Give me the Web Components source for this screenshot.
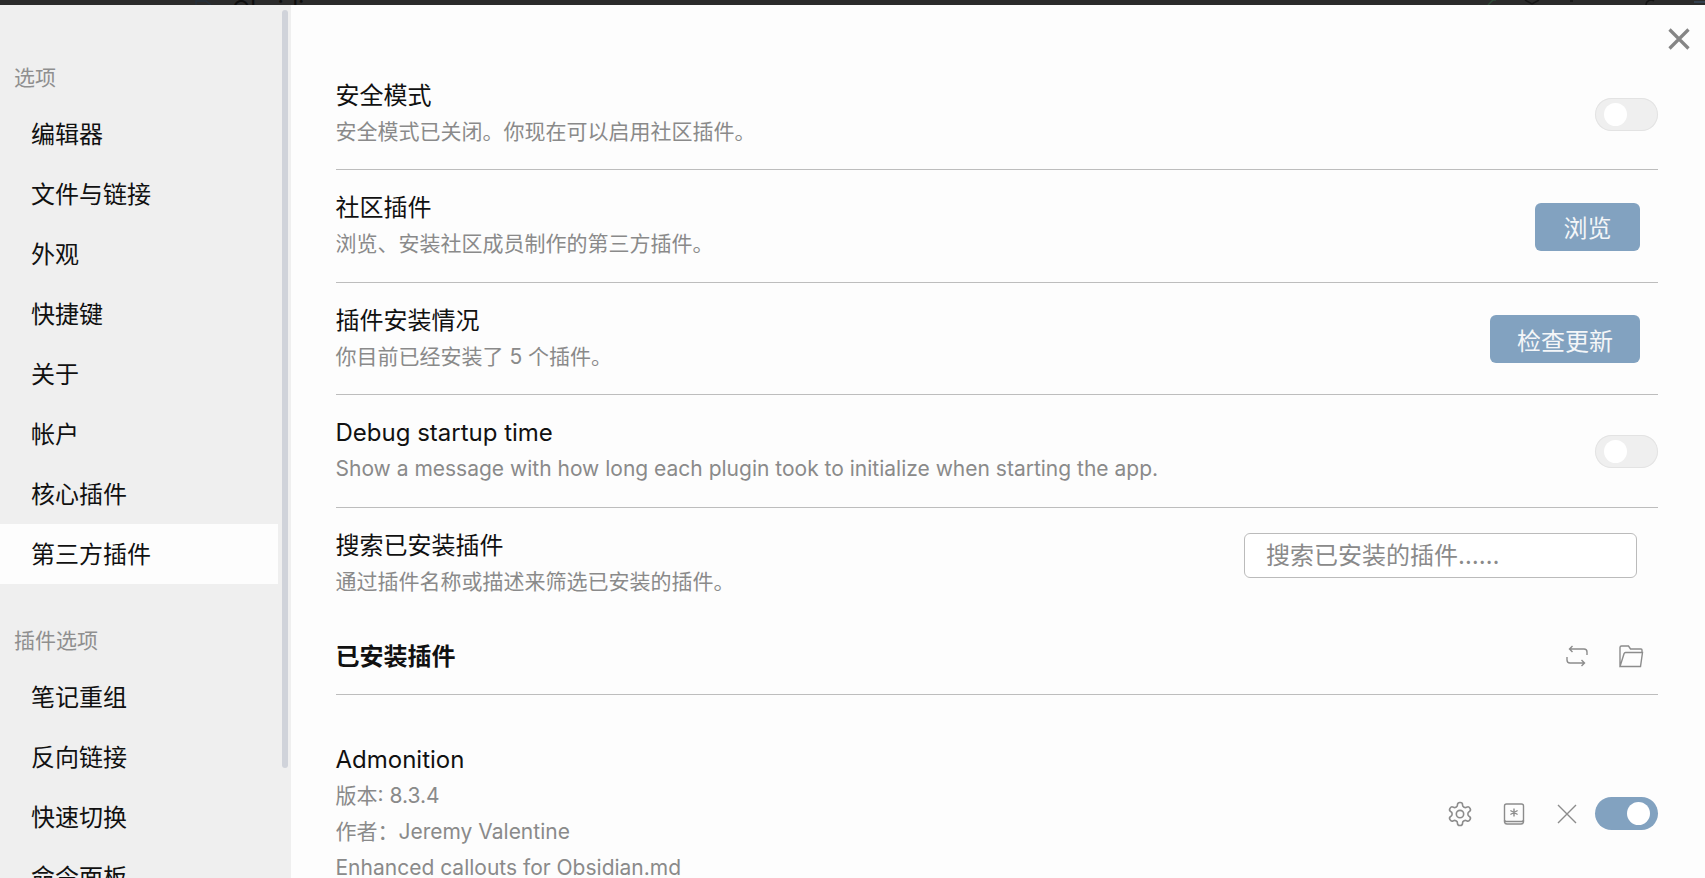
<!DOCTYPE html>
<html lang="zh-CN">
<head>
<meta charset="utf-8">
<title>设置</title>
<style>
	html, body {
		margin: 0;
		height: 100%;
		overflow: hidden;
		font-family: Inter, "Noto Sans CJK SC", sans-serif;
		background: #fdfdfd;
	}
</style>
</head>
<body>
<settings-modal>
	<settings-sidebar slot="side">
		<nav-group label="选项">
			<nav-item>编辑器</nav-item>
			<nav-item>文件与链接</nav-item>
			<nav-item>外观</nav-item>
			<nav-item>快捷键</nav-item>
			<nav-item>关于</nav-item>
			<nav-item>帐户</nav-item>
			<nav-item>核心插件</nav-item>
			<nav-item active>第三方插件</nav-item>
		</nav-group>
		<nav-group label="插件选项">
			<nav-item>笔记重组</nav-item>
			<nav-item>反向链接</nav-item>
			<nav-item>快速切换</nav-item>
			<nav-item>命令面板</nav-item>
		</nav-group>
	</settings-sidebar>

	<setting-row name="安全模式" desc="安全模式已关闭。你现在可以启用社区插件。">
		<toggle-switch></toggle-switch>
	</setting-row>
	<setting-row name="社区插件" desc="浏览、安装社区成员制作的第三方插件。">
		<action-button>浏览</action-button>
	</setting-row>
	<setting-row name="插件安装情况" desc="你目前已经安装了 5 个插件。">
		<action-button>检查更新</action-button>
	</setting-row>
	<setting-row name="Debug startup time" desc="Show a message with how long each plugin took to initialize when starting the app.">
		<toggle-switch></toggle-switch>
	</setting-row>
	<setting-row name="搜索已安装插件" desc="通过插件名称或描述来筛选已安装的插件。" plain>
		<search-field placeholder="搜索已安装的插件……"></search-field>
	</setting-row>

	<section-heading title="已安装插件">
		<icon-button icon="swap"></icon-button>
		<icon-button icon="folder"></icon-button>
	</section-heading>

	<plugin-row name="Admonition" version="版本: 8.3.4" author="作者：Jeremy Valentine" desc="Enhanced callouts for Obsidian.md">
		<icon-button icon="gear"></icon-button>
		<icon-button icon="hotkey"></icon-button>
		<icon-button icon="cross"></icon-button>
		<toggle-switch on></toggle-switch>
	</plugin-row>
</settings-modal>

<script>
const ICONS = {
	swap: '<path d="M7.500 2 4.500 5l3 3M4.500 5H19a3 3 0 0 1 3 3v3M16.500 22l3-3-3-3M19.500 19H5a3 3 0 0 1-3-3v-3"/>',
	folder: '<path d="M1 22.500V3.500A1.500 1.500 0 0 1 2.500 2h7l2 3h10.500a1 1 0 0 1 1 1V8.500M1 22.500h20.500l2-14H6.500a1.500 1.500 0 0 0-1.400 1z"/>',
	gear: '<g transform="translate(12 12) scale(1.15) translate(-12 -12)"><path d="M12.220 2h-.44a2 2 0 0 0-2 2v.18a2 2 0 0 1-1 1.730l-.43.25a2 2 0 0 1-2 0l-.15-.08a2 2 0 0 0-2.730.73l-.22.38a2 2 0 0 0 .73 2.730l.15.1a2 2 0 0 1 1 1.720v.51a2 2 0 0 1-1 1.740l-.15.09a2 2 0 0 0-.73 2.730l.22.38a2 2 0 0 0 2.730.73l.15-.08a2 2 0 0 1 2 0l.43.25a2 2 0 0 1 1 1.730V20a2 2 0 0 0 2 2h.44a2 2 0 0 0 2-2v-.18a2 2 0 0 1 1-1.730l.43-.25a2 2 0 0 1 2 0l.15.08a2 2 0 0 0 2.730-.73l.22-.39a2 2 0 0 0-.73-2.730l-.15-.08a2 2 0 0 1-1-1.740v-.5a2 2 0 0 1 1-1.740l.15-.09a2 2 0 0 0 .73-2.730l-.22-.38a2 2 0 0 0-2.730-.73l-.15.08a2 2 0 0 1-2 0l-.43-.25a2 2 0 0 1-1-1.730V4a2 2 0 0 0-2-2z"/><circle cx="12" cy="12" r="3.200"/></g>',
	hotkey: '<rect x="2.500" y="2" width="19" height="17.500" rx="2"/><path d="M2.500 18v2a2.500 2.500 0 0 0 2.500 2h14a2.500 2.500 0 0 0 2.500-2v-2M12 6.500v8M8.400 8.500l7.200 4M15.600 8.500l-7.200 4"/>',
	cross: '<path d="M3 3l18 18M21 3 3 21"/>'
}

class SettingsModal extends HTMLElement {
	constructor() {
		super()
		this.attachShadow({ mode: 'open' })
	}

	connectedCallback() {
		this.shadowRoot.innerHTML = `
			<style>
				:host {
					display: flex;
					flex-direction: column;
					height: 100vh;
					overflow: hidden;
					position: relative;
				}
				.strip {
					flex: 0 0 5px;
					position: relative;
					overflow: hidden;
					background: #2b2b2b;
					color: #0e0e0e;
					font-size: 24px;
					line-height: 24px;
					padding-left: 232px;
				}
				.strip span {
					display: block;
					margin-top: -2px;
				}
				.strip svg {
					position: absolute;
					top: 0;
					left: 0;
					fill: none;
					stroke-width: 1.500;
				}
				.body {
					flex: 1;
					display: flex;
					min-height: 0;
				}
				.content {
					flex: 1;
					min-width: 0;
					padding: 52.500px 47px 0 44.500px;
					background: #fdfdfd;
					overflow: hidden;
				}
				.close {
					position: absolute;
					top: 28px;
					left: 1668px;
					width: 22px;
					height: 22px;
				}
				.close svg {
					display: block;
					stroke: #858585;
					stroke-width: 3.200;
					fill: none;
				}
			</style>
			<div class="strip">
				<span>Obsidian</span>
				<svg width="1705" height="5" viewBox="0 0 1705 5">
					<path d="M196 5V1h10l5 4" stroke="#26303b"/>
					<path d="M1488 5l5-5h3" stroke="#2f4a38"/>
					<path d="M1525 0l7 4 7-4" stroke="#161616"/>
					<path d="M1570 1h3" stroke="#161616"/>
					<path d="M1646 5a5 5 0 0 1 8-4" stroke="#141414"/>
					<path d="M1694 2h11" stroke="#3a4a5c"/>
				</svg>
			</div>
			<div class="body">
				<slot name="side"></slot>
				<div class="content"><slot></slot></div>
			</div>
			<div class="close"><svg width="22" height="22" viewBox="0 0 22 22"><path d="M1.500 1.500l19 19M20.500 1.500l-19 19"/></svg></div>
		`
	}
}
customElements.define('settings-modal', SettingsModal)

class SettingsSidebar extends HTMLElement {
	constructor() {
		super()
		this.attachShadow({ mode: 'open' })
	}

	connectedCallback() {
		this.shadowRoot.innerHTML = `
			<style>
				:host {
					display: block;
					position: relative;
					flex: 0 0 291px;
					box-sizing: border-box;
					padding: 57px 13px 0 0;
					background: #efefef;
					overflow: hidden;
				}
				.thumb {
					position: absolute;
					top: 5px;
					left: 282px;
					width: 6px;
					height: 758px;
					border-radius: 3px;
					background: #d0d3da;
				}
			</style>
			<slot></slot>
			<div class="thumb"></div>
		`
	}
}
customElements.define('settings-sidebar', SettingsSidebar)

class NavGroup extends HTMLElement {
	constructor() {
		super()
		this.attachShadow({ mode: 'open' })
	}

	connectedCallback() {
		this.shadowRoot.innerHTML = `
			<style>
				:host {
					display: block;
				}
				:host(:not(:first-child)) {
					margin-top: 41px;
				}
				.label {
					font-size: 21px;
					line-height: 32px;
					color: #8f8f8f;
					padding-left: 14px;
					margin-bottom: 10px;
				}
			</style>
			<div class="label">${this.getAttribute('label')}</div>
			<slot></slot>
		`
	}
}
customElements.define('nav-group', NavGroup)

class NavItem extends HTMLElement {
	constructor() {
		super()
		this.attachShadow({ mode: 'open' })
	}

	connectedCallback() {
		this.shadowRoot.innerHTML = `
			<style>
				:host {
					display: block;
					height: 60px;
					line-height: 62px;
					padding-left: 31px;
					font-size: 24px;
					color: #111;
				}
				:host([active]) {
					background: #fdfdfd;
				}
			</style>
			<slot></slot>
		`
	}
}
customElements.define('nav-item', NavItem)

class SettingRow extends HTMLElement {
	constructor() {
		super()
		this.attachShadow({ mode: 'open' })
	}

	connectedCallback() {
		this.shadowRoot.innerHTML = `
			<style>
				:host {
					display: flex;
					align-items: center;
					justify-content: space-between;
					box-sizing: border-box;
					height: 112.500px;
					padding-top: 1px;
					border-bottom: 1.500px solid #bdbdbd;
				}
				:host([plain]) {
					border-bottom: 0;
				}
				.name {
					font-size: 24px;
					line-height: 36px;
					color: #111;
				}
				.desc {
					font-size: 21px;
					line-height: 36px;
					color: #8a8a8a;
				}
				::slotted(toggle-switch),
				::slotted(action-button) {
					margin-top: 1px;
				}
			</style>
			<div>
				<div class="name">${this.getAttribute('name')}</div>
				<div class="desc">${this.getAttribute('desc')}</div>
			</div>
			<slot></slot>
		`
	}
}
customElements.define('setting-row', SettingRow)

class SectionHeading extends HTMLElement {
	constructor() {
		super()
		this.attachShadow({ mode: 'open' })
	}

	connectedCallback() {
		this.shadowRoot.innerHTML = `
			<style>
				:host {
					display: flex;
					align-items: center;
					justify-content: space-between;
					box-sizing: border-box;
					height: 75px;
					padding: 0 15px 6px 0;
					border-bottom: 1.500px solid #bdbdbd;
				}
				.title {
					font-size: 24px;
					font-weight: 700;
					color: #111;
				}
				.tools {
					display: flex;
					gap: 30px;
					margin-top: 4px;
				}
			</style>
			<div class="title">${this.getAttribute('title')}</div>
			<div class="tools"><slot></slot></div>
		`
	}
}
customElements.define('section-heading', SectionHeading)

class PluginRow extends HTMLElement {
	constructor() {
		super()
		this.attachShadow({ mode: 'open' })
	}

	connectedCallback() {
		this.shadowRoot.innerHTML = `
			<style>
				:host {
					display: flex;
					align-items: center;
					justify-content: space-between;
					padding-top: 46.500px;
				}
				.name {
					font-size: 24px;
					line-height: 36px;
					color: #111;
				}
				.meta {
					font-size: 21px;
					line-height: 36px;
					color: #8a8a8a;
				}
				.tools {
					display: flex;
					align-items: center;
					gap: 29.500px;
				}
				::slotted(toggle-switch) {
					margin-left: -13.500px;
				}
			</style>
			<div>
				<div class="name">${this.getAttribute('name')}</div>
				<div class="meta">${this.getAttribute('version')}</div>
				<div class="meta">${this.getAttribute('author')}</div>
				<div class="meta">${this.getAttribute('desc')}</div>
			</div>
			<div class="tools"><slot></slot></div>
		`
	}
}
customElements.define('plugin-row', PluginRow)

class ToggleSwitch extends HTMLElement {
	constructor() {
		super()
		this.attachShadow({ mode: 'open' })
	}

	connectedCallback() {
		this.shadowRoot.innerHTML = `
			<style>
				:host {
					display: flex;
					align-items: center;
					box-sizing: border-box;
					width: 63px;
					height: 33px;
					padding: 0 9px;
					border-radius: 17px;
					background: #efefef;
					box-shadow: inset 0 0 0 1px #e3e3e3;
				}
				:host([on]) {
					justify-content: flex-end;
					padding: 0 8px;
					background: #82a2c0;
					box-shadow: none;
				}
				.knob {
					width: 23px;
					height: 23px;
					border-radius: 50%;
					background: #fff;
				}
			</style>
			<div class="knob"></div>
		`
	}
}
customElements.define('toggle-switch', ToggleSwitch)

class ActionButton extends HTMLElement {
	constructor() {
		super()
		this.attachShadow({ mode: 'open' })
	}

	connectedCallback() {
		this.shadowRoot.innerHTML = `
			<style>
				:host {
					display: flex;
					align-items: center;
					justify-content: center;
					box-sizing: border-box;
					min-width: 105px;
					height: 48px;
					padding: 0 27px;
					margin-right: 18px;
					border-radius: 6px;
					background: #82a2c0;
					color: #f4f6f8;
					font-size: 24px;
				}
			</style>
			<slot></slot>
		`
	}
}
customElements.define('action-button', ActionButton)

class SearchField extends HTMLElement {
	constructor() {
		super()
		this.attachShadow({ mode: 'open' })
	}

	connectedCallback() {
		this.shadowRoot.innerHTML = `
			<style>
				:host {
					display: block;
					margin: 0 21px 17px 0;
				}
				input {
					display: block;
					box-sizing: border-box;
					width: 393px;
					height: 45px;
					padding: 0 21px;
					border: 1px solid #bbb;
					border-radius: 6px;
					background: #fff;
					outline: none;
					font: 24px Inter, "Noto Sans CJK SC", sans-serif;
					color: #111;
				}
				input::placeholder {
					color: #8a8a8a;
					opacity: 1;
				}
			</style>
			<input type="text" placeholder="${this.getAttribute('placeholder')}">
		`
	}
}
customElements.define('search-field', SearchField)

class IconButton extends HTMLElement {
	constructor() {
		super()
		this.attachShadow({ mode: 'open' })
	}

	connectedCallback() {
		this.shadowRoot.innerHTML = `
			<style>
				:host {
					display: block;
					width: 24px;
					height: 24px;
				}
				svg {
					display: block;
					fill: none;
					stroke: #8c8c8c;
					stroke-width: 1.400;
					overflow: visible;
				}
			</style>
			<svg width="24" height="24" viewBox="0 0 24 24">${ICONS[this.getAttribute('icon')]}</svg>
		`
	}
}
customElements.define('icon-button', IconButton)
</script>
</body>
</html>
